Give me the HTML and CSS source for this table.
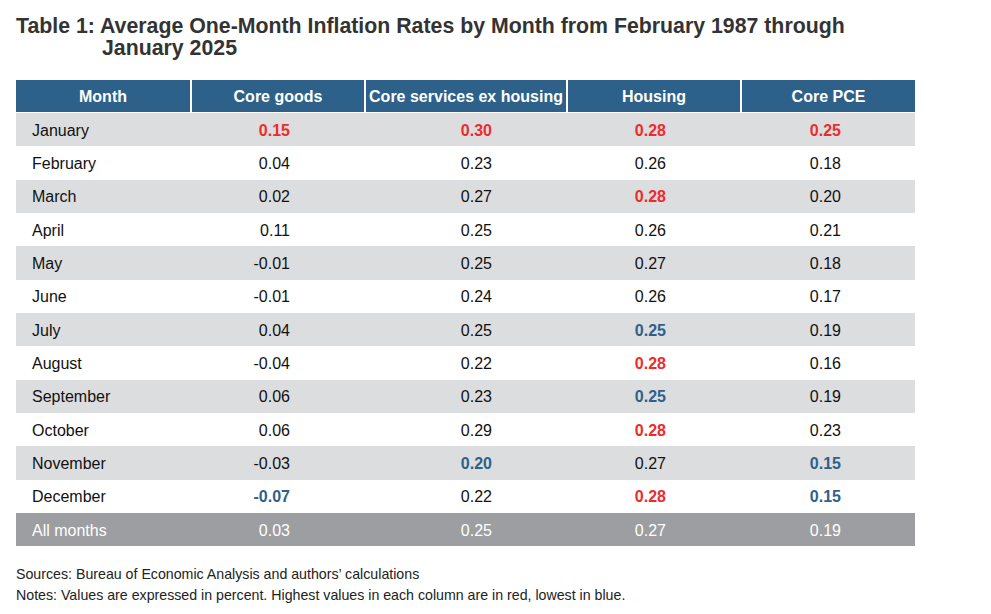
FILE: index.html
```html
<!DOCTYPE html>
<html>
<head>
<meta charset="utf-8">
<link rel="stylesheet" href="styles.css">
</head>
<body>
<div class="page">
  <h1 class="title"><span class="label">Table 1:</span> Average One-Month Inflation Rates by Month from February 1987 through January 2025</h1>
  <table class="data">
    <colgroup>
      <col class="c-month"><col class="c-goods"><col class="c-serv"><col class="c-house"><col class="c-pce">
    </colgroup>
    <thead>
      <tr><th>Month</th><th>Core goods</th><th>Core services ex housing</th><th>Housing</th><th>Core PCE</th></tr>
    </thead>
    <tbody>
      <tr class="shade"><td>January</td><td class="hi">0.15</td><td class="hi">0.30</td><td class="hi">0.28</td><td class="hi">0.25</td></tr>
      <tr><td>February</td><td>0.04</td><td>0.23</td><td>0.26</td><td>0.18</td></tr>
      <tr class="shade"><td>March</td><td>0.02</td><td>0.27</td><td class="hi">0.28</td><td>0.20</td></tr>
      <tr><td>April</td><td>0.11</td><td>0.25</td><td>0.26</td><td>0.21</td></tr>
      <tr class="shade"><td>May</td><td>-0.01</td><td>0.25</td><td>0.27</td><td>0.18</td></tr>
      <tr><td>June</td><td>-0.01</td><td>0.24</td><td>0.26</td><td>0.17</td></tr>
      <tr class="shade"><td>July</td><td>0.04</td><td>0.25</td><td class="lo">0.25</td><td>0.19</td></tr>
      <tr><td>August</td><td>-0.04</td><td>0.22</td><td class="hi">0.28</td><td>0.16</td></tr>
      <tr class="shade"><td>September</td><td>0.06</td><td>0.23</td><td class="lo">0.25</td><td>0.19</td></tr>
      <tr><td>October</td><td>0.06</td><td>0.29</td><td class="hi">0.28</td><td>0.23</td></tr>
      <tr class="shade"><td>November</td><td>-0.03</td><td class="lo">0.20</td><td>0.27</td><td class="lo">0.15</td></tr>
      <tr><td>December</td><td class="lo">-0.07</td><td>0.22</td><td class="hi">0.28</td><td class="lo">0.15</td></tr>
      <tr class="total"><td>All months</td><td>0.03</td><td>0.25</td><td>0.27</td><td>0.19</td></tr>
    </tbody>
  </table>
  <div class="notes">
    <p>Sources: Bureau of Economic Analysis and authors’ calculations</p>
    <p>Notes: Values are expressed in percent. Highest values in each column are in red, lowest in blue.</p>
  </div>
</div>
</body>
</html>
```
FILE: styles.css
```css
html, body {
  margin: 0;
  padding: 0;
  background: #ffffff;
}
.page {
  padding: 15px 16px 0 16px;
  font-family: "Liberation Sans", Arial, sans-serif;
  color: #111;
}
.title {
  margin: 0;
  font-size: 21.3px;
  line-height: 22px;
  font-weight: bold;
  color: #333333;
  padding-left: 86px;
  text-indent: -86px;
  width: 770px;
}
.data {
  margin-top: 21px;
  border-collapse: separate;
  border-spacing: 0;
  table-layout: fixed;
  width: 899px;
  font-size: 16px;
}
.c-month { width: 174px; }
.c-goods { width: 174px; }
.c-serv { width: 202px; }
.c-house { width: 174px; }
.c-pce { width: 175px; }
.data th {
  background: #2e6189;
  color: #ffffff;
  font-weight: bold;
  height: 33px;
  padding: 1px 0 0 0;
  text-align: center;
  border-left: 2px solid #ffffff;
  border-bottom: 1px solid #ffffff;
  box-sizing: border-box;
}
.data th:first-child { border-left: 0; }
.data td {
  height: 33.33px;
  padding: 2px 74px 0 0;
  text-align: right;
  color: #111;
  box-sizing: border-box;
}
.data td:first-child {
  text-align: left;
  padding: 2px 0 0 16px;
}
.data tr.shade td { background: #dcdddf; }
.data td.hi { color: #ee2b2b; font-weight: bold; }
.data td.lo { color: #2e6189; font-weight: bold; }
.data tr.total td {
  background: #9c9ea1;
  color: #ffffff;
}
.notes {
  margin-top: 18px;
  font-family: "Liberation Sans", Arial, sans-serif;
  font-size: 14.2px;
  color: #222;
  line-height: 21px;
}
.notes p { margin: 0; }
```
